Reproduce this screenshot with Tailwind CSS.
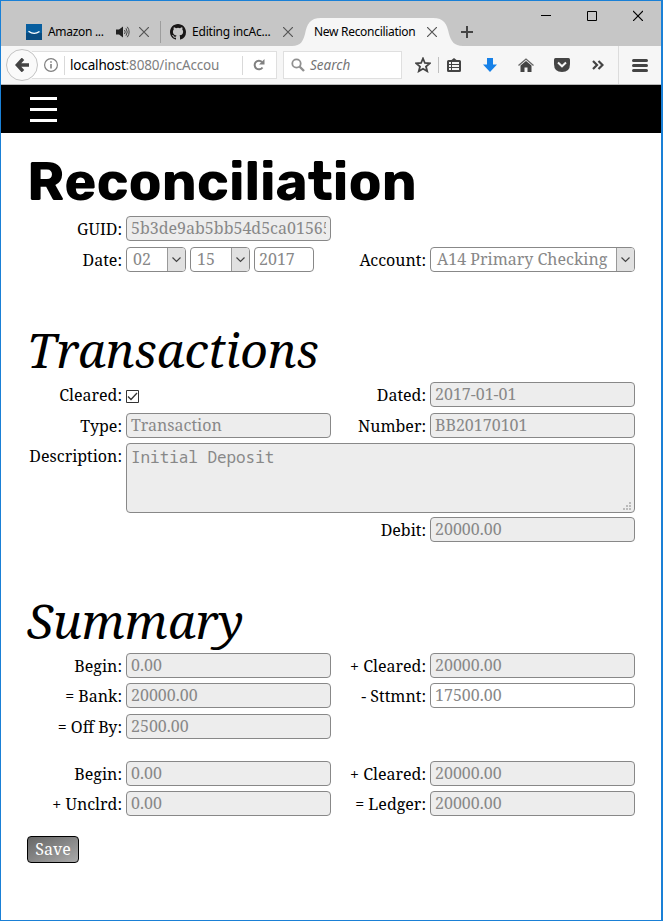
<!DOCTYPE html>
<html lang="en">
<head>
<meta charset="utf-8">
<title>New Reconciliation</title>
<script src="https://cdn.jsdelivr.net/npm/@tailwindcss/browser@4"></script>
</head>
<body class="w-[663px] h-[921px] overflow-hidden bg-white">
<div class="w-[663px] h-[921px] border border-r-2 border-[#1a80d6] bg-white text-black font-['Noto_Serif','Droid_Serif','DejaVu_Serif_Condensed','DejaVu_Serif',serif] text-[16px]">

  <!-- Tab strip -->
  <header class="relative h-[45px] bg-[#c6c6c6] font-['Noto_Sans',sans-serif] text-[12px] tracking-[-0.3px]">
    <svg class="absolute left-[291px] top-[17px]" width="172" height="28"><path d="M0 28C9 28 11 23 13 16C15 6 18 0 29 0H141C152 0 155 6 157 16C159 23 162 28 171 28Z" fill="#f6f6f6"/></svg>
    <div class="relative flex items-center h-[28px] top-[17px] pl-[25px]">
      <svg width="16" height="16" class="shrink-0"><rect width="16" height="16" fill="#075e9f"/><rect y="9" width="16" height="7" fill="#084b80"/><path d="M2.500 7.200Q8 11.500 13.500 7.500" stroke="#fff" stroke-width="1.300" fill="none"/></svg>
      <span class="ml-[6px] w-[68px] whitespace-pre">Amazon ...</span>
      <svg width="14" height="12" class="shrink-0" fill="none" stroke="#444"><path d="M0 3.500H3L7 .5V11.500L3 8.500H0Z" fill="#222" stroke="none"/><path d="M8.500 4Q10 6 8.500 8M10 2.300Q12.500 6 10 9.700M11.300 .8Q15 6 11.300 11.200" stroke-width="1"/></svg>
      <svg width="10" height="10" class="ml-[9px] shrink-0" stroke="#555" stroke-width="1.200"><path d="M0 0L10 10M10 0L0 10"/></svg>
      <i class="block ml-[11px] w-px h-[22px] bg-[#9d9d9d]"></i>
      <svg width="16" height="16" viewBox="0 0 16 16" class="ml-[9px] shrink-0"><path fill="#181616" d="M8 0C3.580 0 0 3.580 0 8c0 3.540 2.290 6.530 5.470 7.590.4.070.55-.17.55-.38 0-.19-.01-.82-.01-1.490-2.010.37-2.530-.49-2.690-.94-.09-.23-.48-.94-.82-1.130-.28-.15-.68-.52-.01-.53.63-.01 1.080.58 1.230.82.72 1.210 1.870.87 2.330.66.07-.52.28-.87.51-1.070-1.780-.2-3.640-.89-3.640-3.950 0-.87.31-1.590.82-2.150-.08-.2-.36-1.020.08-2.120 0 0 .67-.21 2.200.82a7.600 7.600 0 0 1 4 0c1.530-1.040 2.200-.82 2.200-.82.44 1.100.16 1.920.08 2.120.51.56.82 1.270.82 2.150 0 3.070-1.870 3.750-3.650 3.950.29.25.54.73.54 1.480 0 1.070-.01 1.930-.01 2.200 0 .21.15.46.55.38A8 8 0 0 0 16 8c0-4.420-3.580-8-8-8z"/></svg>
      <span class="ml-[6px] w-[91px] whitespace-pre tracking-[-0.2px]">Editing incAc...</span>
      <svg width="10" height="10" class="shrink-0" stroke="#555" stroke-width="1.200"><path d="M0 0L10 10M10 0L0 10"/></svg>
      <span class="ml-[21px] w-[113px] whitespace-pre">New Reconciliation</span>
      <svg width="10" height="10" class="shrink-0" stroke="#555" stroke-width="1.200"><path d="M0 0L10 10M10 0L0 10"/></svg>
      <svg width="12" height="12" class="ml-[24px] shrink-0" stroke="#444" stroke-width="2"><path d="M0 6H12M6 0V12"/></svg>
    </div>
    <div class="absolute right-[18px] top-[9px] flex gap-[36px]">
      <svg width="10" height="11" stroke="#000"><path d="M0 5.500H10"/></svg>
      <svg width="10" height="11" stroke="#000" fill="none"><path d="M.5 1.500H9.500V10.500H.5Z"/></svg>
      <svg width="10" height="11" stroke="#000" stroke-width="1.200"><path d="M0 1L10 11M10 1L0 11"/></svg>
    </div>
  </header>

  <!-- Toolbar -->
  <div class="h-[39px] bg-[#f6f6f6] border-b border-[#b8b8b8] flex items-center font-['Noto_Sans',sans-serif] text-[13.5px]">
    <div class="z-10 ml-[5px] w-[32px] h-[32px] shrink-0 rounded-full border border-[#c3c3c3] bg-[#fafafa] flex items-center justify-center">
      <svg width="14" height="14" fill="none" stroke="#444" stroke-width="3.400"><path d="M8 .8L2.300 7L8 13.200M2.500 7H14"/></svg>
    </div>
    <div class="-ml-[6px] pl-[12px] w-[245px] h-[28px] shrink-0 border border-l-0 border-[#dfdfdf] bg-white flex items-center">
      <svg width="14" height="14" class="shrink-0" fill="none" stroke="#808080"><circle cx="7" cy="7" r="6.400" stroke-width="1.200"/><path d="M7 6V10.500M7 3.200V4.800" stroke-width="1.600"/></svg>
      <i class="block ml-[6px] w-px h-[19px] bg-[#d9d9d9]"></i>
      <span class="ml-[5px] w-[147px] whitespace-nowrap text-[#808080] tracking-[-0.16px]"><span class="text-black">localhost</span>:8080/incAccou</span>
      <i class="block ml-[25px] w-px h-[19px] bg-[#d9d9d9]"></i>
      <svg width="12" height="12" class="ml-[10px] shrink-0" fill="none" stroke="#808080" stroke-width="2"><path d="M9 3A4.300 4.300 0 1 0 9.500 8.500"/><path d="M11.500 0V5.500H6Z" fill="#808080" stroke="none"/></svg>
    </div>
    <div class="ml-[6px] pl-[7px] w-[119px] h-[28px] shrink-0 border border-[#dfdfdf] bg-white flex items-center">
      <svg width="14" height="14" fill="none" stroke="#909090"><circle cx="5.500" cy="5.500" r="4.200" stroke-width="1.800"/><path d="M8.500 8.500L13 13" stroke-width="2.400"/></svg>
      <span class="ml-[5px] pt-px italic text-[#757575]">Search</span>
    </div>
    <svg width="16" height="16" class="ml-[13px] shrink-0" fill="none" stroke="#444" stroke-width="1.800"><path d="M8 1.500L9.900 6L14.700 6.400L11 9.500L12.200 14.200L8 11.700L3.800 14.200L5 9.500L1.300 6.400L6.100 6Z"/></svg>
    <i class="block ml-[7px] w-px h-[16px] bg-[#c0c0c0]"></i>
    <svg width="14" height="14" class="ml-[8px] shrink-0"><path d="M1.500 2H4.500L7 0L9.500 2H12.500Q14 2 14 3.500V12.500Q14 14 12.500 14H1.500Q0 14 0 12.500V3.500Q0 2 1.500 2Z" fill="#444"/><path d="M2 4H4V6H2ZM5 4H12V6H5ZM2 7H4V9H2ZM5 7H12V9H5ZM2 10H4V12H2ZM5 10H12V12H5Z" fill="#f6f6f6"/></svg>
    <svg width="14" height="14" class="ml-[22px] shrink-0" fill="#1781e8"><path d="M4 0H10V6.500H14L7 14L0 6.500H4Z"/></svg>
    <svg width="16" height="14" class="ml-[21px] shrink-0"><path d="M.5 7.500L8 1L15.500 7.500" fill="none" stroke="#666" stroke-width="1.300"/><path d="M2.500 7.500L8 3L13.500 7.500V14H9.500V9.500H6.500V14H2.500Z" fill="#444"/></svg>
    <svg width="16" height="14" class="ml-[20px] shrink-0"><path d="M1.500 0H14.500Q16 0 16 1.500V6Q16 14 8 14Q0 14 0 6V1.500Q0 0 1.500 0Z" fill="#444"/><path d="M4 4.500L8 8.300L12 4.500" fill="none" stroke="#f6f6f6" stroke-width="2"/></svg>
    <svg width="12" height="10" class="ml-[22px] shrink-0" fill="none" stroke="#444" stroke-width="2.200"><path d="M1 1L5 5L1 9M6.500 1L10.500 5L6.500 9"/></svg>
    <i class="block ml-[14px] w-px h-[38px] bg-[#dcdcdc]"></i>
    <svg width="16" height="13" class="ml-[13px] shrink-0" stroke="#444" stroke-width="3" stroke-linecap="round"><path d="M1.500 1.500H14.500M1.500 6.500H14.500M1.500 11.500H14.500"/></svg>
  </div>

  <!-- Site menu bar -->
  <nav class="h-[48px] bg-black pl-[29px] pt-[12px]">
    <div class="w-[27px] flex flex-col gap-[8px]"><i class="h-[3px] bg-white"></i><i class="h-[3px] bg-white"></i><i class="h-[3px] bg-white"></i></div>
  </nav>

  <main class="pl-[26px] w-[634px]">
    <h1 class="h-[83px] pt-[19px] leading-[60px] whitespace-nowrap font-['Rubik','Inter',sans-serif] font-bold text-[54.4px]">Reconciliation</h1>
    <section class="grid grid-cols-[95px_205px_91px_205px] gap-x-1 gap-y-[6px] auto-rows-[25px]">
      <label class="text-right leading-[27px]">GUID:</label>
      <div class="border border-[#888] rounded-[4px] bg-[#ededed] px-1 leading-[23px] text-[#888]"><div class="overflow-hidden whitespace-nowrap">5b3de9ab5bb54d5ca01565</div></div>
      <label class="col-start-1 text-right leading-[27px]">Date:</label>
      <div class="flex gap-1 text-[#888] leading-[23px]">
        <div class="w-[60px] border border-[#888] rounded-[4px] pl-[6px] flex justify-between overflow-hidden">02<i class="w-[18px] h-[23px] border-l border-[#999] bg-[#e1e1e1] flex items-center justify-center"><svg width="9" height="6" fill="none" stroke="#444" stroke-width="1.200"><path d="M.5 .5L4.500 4.500L8.500 .5"/></svg></i></div>
        <div class="w-[60px] border border-[#888] rounded-[4px] pl-[6px] flex justify-between overflow-hidden">15<i class="w-[18px] h-[23px] border-l border-[#999] bg-[#e1e1e1] flex items-center justify-center"><svg width="9" height="6" fill="none" stroke="#444" stroke-width="1.200"><path d="M.5 .5L4.500 4.500L8.500 .5"/></svg></i></div>
        <div class="w-[60px] border border-[#888] rounded-[4px] px-1">2017</div>
      </div>
      <label class="text-right leading-[27px]">Account:</label>
      <div class="border border-[#888] rounded-[4px] pl-[6px] flex justify-between overflow-hidden text-[#888] leading-[23px] whitespace-nowrap">A14 Primary Checking<i class="w-[18px] h-[23px] border-l border-[#999] bg-[#e1e1e1] flex items-center justify-center"><svg width="9" height="6" fill="none" stroke="#444" stroke-width="1.200"><path d="M.5 .5L4.500 4.500L8.500 .5"/></svg></i></div>
    </section>

    <h2 class="mt-[49px] h-[61px] leading-[58px] italic text-[48px] whitespace-nowrap">Transactions</h2>
    <section class="grid grid-cols-[95px_205px_91px_205px] grid-rows-[25px_25px_70px_25px] gap-x-1 gap-y-[5px]">
      <label class="text-right leading-[27px]">Cleared:</label>
      <svg width="13" height="13" class="mt-[8px]" fill="none"><path d="M.5 .5H12.500V12.500H.5Z" stroke="#333"/><path d="M2 6.500L5 9.500L11 3" stroke="#333" stroke-width="1.300"/></svg>
      <label class="text-right leading-[27px]">Dated:</label>
      <div class="border border-[#888] rounded-[4px] bg-[#ededed] px-1 leading-[23px] text-[#888]">2017-01-01</div>
      <label class="mt-px text-right leading-[27px]">Type:</label>
      <div class="mt-px h-[25px] border border-[#888] rounded-[4px] bg-[#ededed] px-1 leading-[23px] text-[#888]">Transaction</div>
      <label class="mt-px text-right leading-[27px]">Number:</label>
      <div class="mt-px h-[25px] border border-[#888] rounded-[4px] bg-[#ededed] px-1 leading-[23px] text-[#888]">BB20170101</div>
      <label class="mt-px text-right leading-[27px]">Description:</label>
      <div class="mt-px h-[70px] col-span-3 relative border border-[#888] rounded-[4px] bg-[#ededed] px-[4px] pt-[3px] leading-[21px] text-[#888] font-['Noto_Sans_Mono','DejaVu_Sans_Mono',monospace] text-[16px] tracking-[-0.05px]">Initial Deposit
        <svg width="8" height="8" class="absolute right-[3px] bottom-[2px]" fill="#bbb"><path d="M6 0h2v2h-2zM3 3h2v2h-2zM6 3h2v2h-2zM0 6h2v2h-2zM3 6h2v2h-2zM6 6h2v2h-2z"/></svg>
      </div>
      <label class="col-start-3 text-right leading-[27px]">Debit:</label>
      <div class="border border-[#888] rounded-[4px] bg-[#ededed] px-1 leading-[23px] text-[#888]">20000.00</div>
    </section>

    <h2 class="mt-[50px] h-[61px] leading-[58px] italic text-[48px] whitespace-nowrap">Summary</h2>
    <section class="grid grid-cols-[95px_205px_91px_205px] grid-rows-[30px_31px_47px_30px_25px] gap-x-1">
      <label class="text-right leading-[27px]">Begin:</label>
      <div class="h-[25px] border border-[#888] rounded-[4px] bg-[#ededed] px-1 leading-[23px] text-[#888]">0.00</div>
      <label class="text-right leading-[27px]">+ Cleared:</label>
      <div class="h-[25px] border border-[#888] rounded-[4px] bg-[#ededed] px-1 leading-[23px] text-[#888]">20000.00</div>
      <label class="text-right leading-[27px]">= Bank:</label>
      <div class="h-[25px] border border-[#888] rounded-[4px] bg-[#ededed] px-1 leading-[23px] text-[#888]">20000.00</div>
      <label class="text-right leading-[27px]">- Sttmnt:</label>
      <div class="h-[25px] border border-[#888] rounded-[4px] bg-white px-1 leading-[23px] text-[#888]">17500.00</div>
      <label class="text-right leading-[27px]">= Off By:</label>
      <div class="h-[25px] border border-[#888] rounded-[4px] bg-[#ededed] px-1 leading-[23px] text-[#888]">2500.00</div>
      <label class="col-start-1 text-right leading-[27px]">Begin:</label>
      <div class="h-[25px] border border-[#888] rounded-[4px] bg-[#ededed] px-1 leading-[23px] text-[#888]">0.00</div>
      <label class="text-right leading-[27px]">+ Cleared:</label>
      <div class="h-[25px] border border-[#888] rounded-[4px] bg-[#ededed] px-1 leading-[23px] text-[#888]">20000.00</div>
      <label class="text-right leading-[27px]">+ Unclrd:</label>
      <div class="h-[25px] border border-[#888] rounded-[4px] bg-[#ededed] px-1 leading-[23px] text-[#888]">0.00</div>
      <label class="text-right leading-[27px]">= Ledger:</label>
      <div class="h-[25px] border border-[#888] rounded-[4px] bg-[#ededed] px-1 leading-[23px] text-[#888]">20000.00</div>
    </section>
    <button class="block mt-5 w-[52px] h-[27px] border border-black rounded-[4px] bg-linear-to-br from-[#666] to-[#aaa] text-white leading-[24px] pb-[1px]">Save</button>
  </main>
</div>
</body>
</html>
